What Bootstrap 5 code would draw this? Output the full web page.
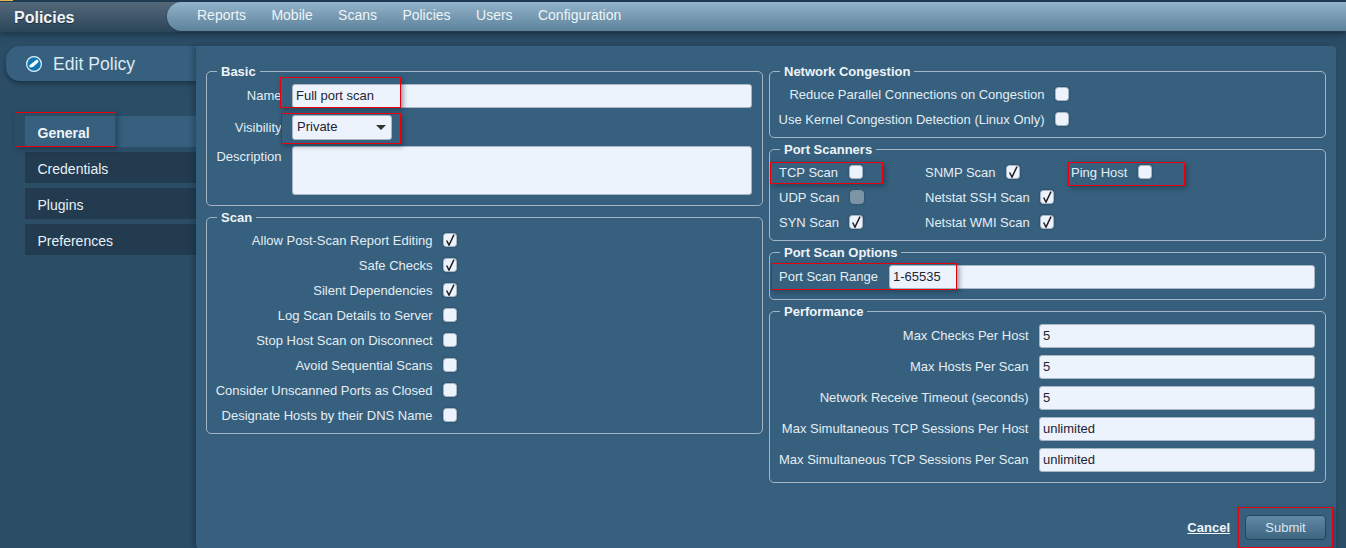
<!DOCTYPE html>
<html lang="en">
<head>
    <meta charset="UTF-8">
    <meta name="viewport" content="width=device-width, initial-scale=1.0">
    <title>Edit Policy</title>
    <link href="https://cdn.jsdelivr.net/npm/bootstrap@5.3.0/dist/css/bootstrap.min.css" rel="stylesheet">
    <style>
        html, body { height: 100%; }
        body { background: #2b4d66; font-family: "Liberation Sans", Arial, sans-serif; font-size: 13px; color: #e4edf4; overflow: hidden; }
        .page-wrap { position: relative; width: 1346px; height: 548px; overflow: hidden; }

        .top-bar { height: 32px; background: linear-gradient(#54697a, #2a4559); border-top: 2px solid #1f3a50; box-shadow: 0 3px 6px rgba(15, 35, 50, .55); position: relative; z-index: 2; }
        .top-stripe { position: absolute; left: 0; top: -2px; width: 13px; height: 1px; background: #e9b84a; }
        .top-brand { width: 167px; padding-left: 14px; font-size: 16px; font-weight: 700; color: #f1f5f8; line-height: 31px; text-shadow: 0 1px 1px #1b2e3d; }
        .top-menu { height: 29px; background: linear-gradient(#92b3cb, #5c8299); border-radius: 15px 0 0 15px; padding-left: 30px; gap: 25.4px; box-shadow: 0 1px 2px rgba(15, 35, 50, .4); }
        .top-menu a { font-size: 14px; color: #eef4f8; text-decoration: none; line-height: 26px; }

        .side-col { width: 196px; padding-top: 14px; }
        .title-tab { height: 35px; margin-left: 6px; background: #36607e; border-radius: 14px 0 0 14px; padding: 1px 0 0 20px; gap: 11px; font-size: 17.6px; color: #dfe9f1; box-shadow: 0 3px 4px rgba(15, 35, 50, .55); }
        .side-tabs { margin: 35px 0 0 25px; gap: 5px; }
        .side-tabs a { height: 31px; line-height: 28px; padding: 3px 0 0 12.5px; font-size: 14px; color: #e8f0f6; background: #223b4f; text-decoration: none; }
        .side-tabs a.on { background: #36607e; font-weight: 700; color: #f0f5f9; }

        .main-panel { width: 1140px; height: 504px; margin-top: 14px; padding: 17px 10px 0; background: #36607e; border-radius: 0 4px 0 6px; box-shadow: -3px 0 5px rgba(15, 35, 50, .35); }
        .form-cols { gap: 6px; }
        .form-cols > div { width: 557px; }

        .field-box { border: 1px solid #a3b5c3; border-radius: 5px; margin: 0 0 3px; padding: 0; }
        .field-box legend { float: none; width: auto; margin: 0 0 0 10px; padding: 2px 4px 0; font-size: 13px; line-height: 14px; font-weight: 700; color: #eef3f7; }
        .box-basic { padding: 5px 0 10px; }
        .box-scan { padding: 3px 0 5px; }
        .box-net { padding: 3px 0 5px; }
        .box-scanners { padding: 3px 0 5px 9px; }
        .box-range { padding: 5px 10px 10px 9px; }
        .box-perf { padding: 5px 10px 10px 0; }
        .box-scanners legend, .box-range legend { margin-left: 1px; }

        .line-check { height: 25px; gap: 10.5px; }
        .line-field { gap: 10px; }
        .gap-after-name { margin-bottom: 7px; }
        .gap-after-vis { margin-bottom: 6px; }
        .perf-rows { gap: 7px; }
        .label-basic { width: 75px; padding-right: .5px; text-align: right; }
        .label-desc { padding-top: 1px; }
        .label-scan { width: 225.5px; text-align: right; }
        .label-net { width: 274.5px; text-align: right; }
        .label-perf { width: 259px; padding-right: .5px; text-align: right; }
        .label-range { width: 110px; }
        .scan-grid { grid-template-columns: 146px 146px auto; }
        .inset-right { margin-right: 10px; }

        .text-field, .select-field, .area-field { height: 24px; padding: 0 3px 2px; font-size: 13px; color: #1c2433; background-color: #edf3fc; border: 1px solid #a7b6c4; border-radius: 3px; font-family: inherit; }
        .select-field { width: 100px; height: 25px; padding-left: 4px; background-position: right 5px center; background-size: 10px 5px; background-image: url("data:image/svg+xml,%3csvg xmlns='http://www.w3.org/2000/svg' viewBox='0 0 10 5'%3e%3cpath d='M0 0h10L5 5z' fill='%23333'/%3e%3c/svg%3e"); }
        .area-field { height: 49px; resize: none; }
        .box-check { width: 14px; height: 14px; margin: -1px 0 0; flex: none; background-color: #edf3fc; border: 1px solid #a7b6c4; border-radius: 3px; box-shadow: 0 0 2px rgba(15, 35, 50, .5); }
        .box-check:checked { background-color: #edf3fc; border-color: #a7b6c4; background-size: 12px 12px; background-image: url("data:image/svg+xml,%3csvg xmlns='http://www.w3.org/2000/svg' viewBox='0 0 12 12'%3e%3cpath d='M2.6 6.5l2.4 4.6L10 .6' fill='none' stroke='%23222' stroke-width='1.5'/%3e%3c/svg%3e"); }
        .box-check:disabled { opacity: 1; background-color: #7d93a6; border-color: #7d93a6; }

        .form-foot { margin-top: 32px; gap: 15px; }
        .cancel-link { font-weight: 700; color: #f1f5f8; text-decoration: underline; }
        .submit-btn { width: 81px; height: 25px; padding: 0; font-size: 13px; color: #dbe7f0; background: linear-gradient(#6089a6, #3d6580); border: 1px solid #22465e; border-radius: 4px; }

        .red-note { position: absolute; border: 1px solid #e8000d; box-shadow: 2px 2px 5px rgba(15, 35, 50, .45); z-index: 5; pointer-events: none; }
        .note-name { left: 280px; top: 77px; width: 121px; height: 31px; }
        .note-vis { left: 281px; top: 113px; width: 120px; height: 31px; }
        .note-gen { left: 15px; top: 112px; width: 101px; height: 35px; }
        .note-tcp { left: 770px; top: 162px; width: 113px; height: 22px; }
        .note-ping { left: 1068px; top: 162px; width: 117px; height: 24px; }
        .note-range { left: 771px; top: 263px; width: 186px; height: 27px; }
        .note-submit { left: 1238px; top: 507px; width: 95px; height: 41px; }
    </style>
</head>
<body>
    <div class="page-wrap">

        <!-- Top bar -->
        <div class="top-bar d-flex">
            <span class="top-stripe"></span>
            <div class="top-brand">Policies</div>
            <nav class="top-menu d-flex flex-grow-1">
                <a href="#">Reports</a>
                <a href="#">Mobile</a>
                <a href="#">Scans</a>
                <a href="#">Policies</a>
                <a href="#">Users</a>
                <a href="#">Configuration</a>
            </nav>
        </div>

        <div class="d-flex">
            <!-- Sidebar -->
            <div class="side-col">
                <div class="title-tab d-flex align-items-center">
                    <svg width="16" height="16" viewBox="0 0 16 16">
                        <circle cx="8" cy="8" r="7.4" fill="#1178b4" stroke="#e6f0f7" stroke-width="1.2"/>
                        <path d="M3.2 9.4 9.6 4.4a1.5 1.5 0 0 1 2.6 1.8L7 11 3.8 11.6z" fill="#fff"/>
                    </svg>
                    <span>Edit Policy</span>
                </div>
                <div class="side-tabs d-flex flex-column">
                    <a class="on" href="#">General</a>
                    <a href="#">Credentials</a>
                    <a href="#">Plugins</a>
                    <a href="#">Preferences</a>
                </div>
            </div>

            <!-- Form panel -->
            <div class="main-panel">
                <div class="form-cols d-flex">
                    <div>
                        <fieldset class="field-box box-basic">
                            <legend>Basic</legend>
                            <div class="line-field gap-after-name d-flex align-items-center">
                                <label class="label-basic">Name</label>
                                <input class="text-field flex-grow-1 inset-right" type="text" value="Full port scan">
                            </div>
                            <div class="line-field gap-after-vis d-flex align-items-center">
                                <label class="label-basic">Visibility</label>
                                <select class="form-select select-field"><option>Private</option></select>
                            </div>
                            <div class="line-field d-flex align-items-start">
                                <label class="label-basic label-desc">Description</label>
                                <textarea class="area-field flex-grow-1 inset-right"></textarea>
                            </div>
                        </fieldset>

                        <fieldset class="field-box box-scan">
                            <legend>Scan</legend>
                            <div class="line-check d-flex align-items-center"><label class="label-scan">Allow Post-Scan Report Editing</label><input class="form-check-input box-check" type="checkbox" checked></div>
                            <div class="line-check d-flex align-items-center"><label class="label-scan">Safe Checks</label><input class="form-check-input box-check" type="checkbox" checked></div>
                            <div class="line-check d-flex align-items-center"><label class="label-scan">Silent Dependencies</label><input class="form-check-input box-check" type="checkbox" checked></div>
                            <div class="line-check d-flex align-items-center"><label class="label-scan">Log Scan Details to Server</label><input class="form-check-input box-check" type="checkbox"></div>
                            <div class="line-check d-flex align-items-center"><label class="label-scan">Stop Host Scan on Disconnect</label><input class="form-check-input box-check" type="checkbox"></div>
                            <div class="line-check d-flex align-items-center"><label class="label-scan">Avoid Sequential Scans</label><input class="form-check-input box-check" type="checkbox"></div>
                            <div class="line-check d-flex align-items-center"><label class="label-scan">Consider Unscanned Ports as Closed</label><input class="form-check-input box-check" type="checkbox"></div>
                            <div class="line-check d-flex align-items-center"><label class="label-scan">Designate Hosts by their DNS Name</label><input class="form-check-input box-check" type="checkbox"></div>
                        </fieldset>
                    </div>

                    <div>
                        <fieldset class="field-box box-net">
                            <legend>Network Congestion</legend>
                            <div class="line-check d-flex align-items-center"><label class="label-net">Reduce Parallel Connections on Congestion</label><input class="form-check-input box-check" type="checkbox"></div>
                            <div class="line-check d-flex align-items-center"><label class="label-net">Use Kernel Congestion Detection (Linux Only)</label><input class="form-check-input box-check" type="checkbox"></div>
                        </fieldset>

                        <fieldset class="field-box box-scanners">
                            <legend>Port Scanners</legend>
                            <div class="scan-grid d-grid">
                                <div class="line-check d-flex align-items-center"><label>TCP Scan</label><input class="form-check-input box-check" type="checkbox"></div>
                                <div class="line-check d-flex align-items-center"><label>SNMP Scan</label><input class="form-check-input box-check" type="checkbox" checked></div>
                                <div class="line-check d-flex align-items-center"><label>Ping Host</label><input class="form-check-input box-check" type="checkbox"></div>
                                <div class="line-check d-flex align-items-center"><label>UDP Scan</label><input class="form-check-input box-check" type="checkbox" disabled></div>
                                <div class="line-check d-flex align-items-center"><label>Netstat SSH Scan</label><input class="form-check-input box-check" type="checkbox" checked></div>
                                <div></div>
                                <div class="line-check d-flex align-items-center"><label>SYN Scan</label><input class="form-check-input box-check" type="checkbox" checked></div>
                                <div class="line-check d-flex align-items-center"><label>Netstat WMI Scan</label><input class="form-check-input box-check" type="checkbox" checked></div>
                            </div>
                        </fieldset>

                        <fieldset class="field-box box-range">
                            <legend>Port Scan Options</legend>
                            <div class="d-flex align-items-center">
                                <label class="label-range">Port Scan Range</label>
                                <input class="text-field flex-grow-1" type="text" value="1-65535">
                            </div>
                        </fieldset>

                        <fieldset class="field-box box-perf">
                            <legend>Performance</legend>
                            <div class="perf-rows d-flex flex-column">
                                <div class="line-field d-flex align-items-center"><label class="label-perf">Max Checks Per Host</label><input class="text-field flex-grow-1" type="text" value="5"></div>
                                <div class="line-field d-flex align-items-center"><label class="label-perf">Max Hosts Per Scan</label><input class="text-field flex-grow-1" type="text" value="5"></div>
                                <div class="line-field d-flex align-items-center"><label class="label-perf">Network Receive Timeout (seconds)</label><input class="text-field flex-grow-1" type="text" value="5"></div>
                                <div class="line-field d-flex align-items-center"><label class="label-perf">Max Simultaneous TCP Sessions Per Host</label><input class="text-field flex-grow-1" type="text" value="unlimited"></div>
                                <div class="line-field d-flex align-items-center"><label class="label-perf">Max Simultaneous TCP Sessions Per Scan</label><input class="text-field flex-grow-1" type="text" value="unlimited"></div>
                            </div>
                        </fieldset>

                        <div class="form-foot d-flex justify-content-end align-items-center">
                            <a class="cancel-link" href="#">Cancel</a>
                            <button class="btn submit-btn" type="button">Submit</button>
                        </div>
                    </div>
                </div>
            </div>
        </div>

        <!-- Red annotation boxes drawn over the screenshot -->
        <div class="red-note note-name"></div>
        <div class="red-note note-vis"></div>
        <div class="red-note note-gen"></div>
        <div class="red-note note-tcp"></div>
        <div class="red-note note-ping"></div>
        <div class="red-note note-range"></div>
        <div class="red-note note-submit"></div>
    </div>

    <script src="https://cdn.jsdelivr.net/npm/bootstrap@5.3.0/dist/js/bootstrap.bundle.min.js"></script>
</body>
</html>
